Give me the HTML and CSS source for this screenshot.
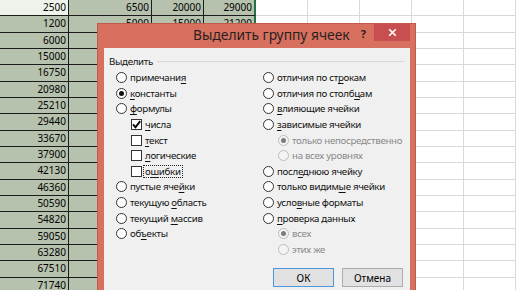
FILE: index.html
```html
<!DOCTYPE html>
<html>
<head>
    <title>Выделить группу ячеек</title>
    <link rel="stylesheet" href="styles.css">
</head>
<body>
    <div class="sheet">
        <div class="c s active">2500</div><div class="c s">6500</div><div class="c s">20000</div><div class="c s edge">29000</div><div class="c"></div><div class="c"></div><div class="c"></div><div class="c"></div><div class="c"></div>
        <div class="c s">1200</div><div class="c s">5000</div><div class="c s">15000</div><div class="c s edge">21200</div><div class="c"></div><div class="c"></div><div class="c"></div><div class="c"></div><div class="c"></div>
        <div class="c s">6000</div><div class="c s"></div><div class="c s"></div><div class="c s edge"></div><div class="c"></div><div class="c"></div><div class="c"></div><div class="c"></div><div class="c"></div>
        <div class="c s">15000</div><div class="c s"></div><div class="c s"></div><div class="c s edge"></div><div class="c"></div><div class="c"></div><div class="c"></div><div class="c"></div><div class="c"></div>
        <div class="c s">16750</div><div class="c s"></div><div class="c s"></div><div class="c s edge"></div><div class="c"></div><div class="c"></div><div class="c"></div><div class="c"></div><div class="c"></div>
        <div class="c s">20980</div><div class="c s"></div><div class="c s"></div><div class="c s edge"></div><div class="c"></div><div class="c"></div><div class="c"></div><div class="c"></div><div class="c"></div>
        <div class="c s">25210</div><div class="c s"></div><div class="c s"></div><div class="c s edge"></div><div class="c"></div><div class="c"></div><div class="c"></div><div class="c"></div><div class="c"></div>
        <div class="c s">29440</div><div class="c s"></div><div class="c s"></div><div class="c s edge"></div><div class="c"></div><div class="c"></div><div class="c"></div><div class="c"></div><div class="c"></div>
        <div class="c s">33670</div><div class="c s"></div><div class="c s"></div><div class="c s edge"></div><div class="c"></div><div class="c"></div><div class="c"></div><div class="c"></div><div class="c"></div>
        <div class="c s">37900</div><div class="c s"></div><div class="c s"></div><div class="c s edge"></div><div class="c"></div><div class="c"></div><div class="c"></div><div class="c"></div><div class="c"></div>
        <div class="c s">42130</div><div class="c s"></div><div class="c s"></div><div class="c s edge"></div><div class="c"></div><div class="c"></div><div class="c"></div><div class="c"></div><div class="c"></div>
        <div class="c s">46360</div><div class="c s"></div><div class="c s"></div><div class="c s edge"></div><div class="c"></div><div class="c"></div><div class="c"></div><div class="c"></div><div class="c"></div>
        <div class="c s">50590</div><div class="c s"></div><div class="c s"></div><div class="c s edge"></div><div class="c"></div><div class="c"></div><div class="c"></div><div class="c"></div><div class="c"></div>
        <div class="c s">54820</div><div class="c s"></div><div class="c s"></div><div class="c s edge"></div><div class="c"></div><div class="c"></div><div class="c"></div><div class="c"></div><div class="c"></div>
        <div class="c s">59050</div><div class="c s"></div><div class="c s"></div><div class="c s edge"></div><div class="c"></div><div class="c"></div><div class="c"></div><div class="c"></div><div class="c"></div>
        <div class="c s">63280</div><div class="c s"></div><div class="c s"></div><div class="c s edge"></div><div class="c"></div><div class="c"></div><div class="c"></div><div class="c"></div><div class="c"></div>
        <div class="c s">67510</div><div class="c s"></div><div class="c s"></div><div class="c s edge"></div><div class="c"></div><div class="c"></div><div class="c"></div><div class="c"></div><div class="c"></div>
        <div class="c s">71740</div><div class="c s"></div><div class="c s"></div><div class="c s edge"></div><div class="c"></div><div class="c"></div><div class="c"></div><div class="c"></div><div class="c"></div>
    </div>

    <div class="dialog">
        <div class="titlebar">
            <span class="title">Выделить группу ячеек</span>
            <span class="help">?</span>
            <span class="close">
                <svg width="9" height="9" viewBox="0 0 9 9"><path d="M1.2 1.2L7.8 7.8M7.8 1.2L1.2 7.8" stroke="#fff" stroke-width="1.6"/></svg>
            </span>
        </div>
        <div class="client">
            <div class="group-head"><span>Выделить</span><i></i></div>
            <div class="cols">
                <div class="col left">
                    <div class="opt"><span class="radio"></span><span>примечани<u>я</u></span></div>
                    <div class="opt"><span class="radio on"></span><span><u>к</u>онстанты</span></div>
                    <div class="opt"><span class="radio"></span><span><u>ф</u>ормулы</span></div>
                    <div class="opt sub"><span class="check on"><svg width="9" height="9" viewBox="0 0 9 9"><path d="M1 4.4L3.5 7.3L8.2 1.2" fill="none" stroke="#000" stroke-width="1.9"/></svg></span><span><u>ч</u>исла</span></div>
                    <div class="opt sub"><span class="check"></span><span><u>т</u>екст</span></div>
                    <div class="opt sub"><span class="check"></span><span><u>л</u>огические</span></div>
                    <div class="opt sub"><span class="check"></span><span class="focus">о<u>ш</u>ибки</span></div>
                    <div class="opt"><span class="radio"></span><span>пустые яче<u>й</u>ки</span></div>
                    <div class="opt"><span class="radio"></span><span>текущую <u>о</u>бласть</span></div>
                    <div class="opt"><span class="radio"></span><span>текущий <u>м</u>ассив</span></div>
                    <div class="opt"><span class="radio"></span><span>об<u>ъ</u>екты</span></div>
                </div>
                <div class="col right">
                    <div class="opt"><span class="radio"></span><span>отличия по ст<u>р</u>окам</span></div>
                    <div class="opt"><span class="radio"></span><span>отличия по столб<u>ц</u>ам</span></div>
                    <div class="opt"><span class="radio"></span><span><u>в</u>лияющие ячейки</span></div>
                    <div class="opt"><span class="radio"></span><span><u>з</u>ависимые ячейки</span></div>
                    <div class="opt sub off"><span class="radio on"></span><span>только непосредственно</span></div>
                    <div class="opt sub off"><span class="radio"></span><span>на всех уровнях</span></div>
                    <div class="opt"><span class="radio"></span><span>посл<u>е</u>днюю ячейку</span></div>
                    <div class="opt"><span class="radio"></span><span>только видим<u>ы</u>е ячейки</span></div>
                    <div class="opt"><span class="radio"></span><span>усло<u>в</u>ные форматы</span></div>
                    <div class="opt"><span class="radio"></span><span><u>п</u>роверка данных</span></div>
                    <div class="opt sub off"><span class="radio on"></span><span>всех</span></div>
                    <div class="opt sub off"><span class="radio"></span><span>этих же</span></div>
                </div>
            </div>
            <div class="buttons">
                <button class="btn default">ОК</button>
                <button class="btn">Отмена</button>
            </div>
        </div>
    </div>
</body>
</html>
```

FILE: styles.css
```css
html, body {
    margin: 0;
    padding: 0;
    height: 290px;
    overflow: hidden;
    background-color: #fff;
}

body {
    position: relative;
    font-family: "Noto Sans", sans-serif;
}

/* spreadsheet behind the dialog */
.sheet {
    display: grid;
    grid-template-columns: 69px 83px 52px 52px 52px 52px 52px 52px 52px;
    grid-auto-rows: 16.33px;
}

.c {
    box-sizing: border-box;
    border-right: 1px solid #d9d9d9;
    border-bottom: 1px solid #d9d9d9;
    font-size: 10px;
    line-height: 15px;
    text-align: right;
    padding-right: 2px;
    color: #000;
}

.c.s {
    background-color: #b6c2ad;
    border-right-color: #1c1c1c;
    border-bottom-color: #1c1c1c;
}

.c.active {
    background-color: #edf2ea;
}

.c.edge {
    border-right: 2px solid #217346;
}

/* dialog */
.dialog {
    position: absolute;
    left: 97px;
    top: 23px;
    width: 319px;
    height: 300px;
    box-sizing: border-box;
    background-color: #d8705f;
    border: 1px solid #c25a4b;
    padding: 0 5px 0 6px;
    display: flex;
    flex-direction: column;
}

.titlebar {
    height: 24px;
    display: flex;
    align-items: flex-start;
    flex-shrink: 0;
}

.title {
    margin-left: 89px;
    padding-top: 2px;
    font-size: 13.8px;
    line-height: 18px;
    white-space: nowrap;
    color: #2a1f1d;
}

.help {
    margin-left: auto;
    font-size: 11px;
    font-weight: bold;
    line-height: 14px;
    padding-top: 3px;
    margin-right: 8px;
    color: #2a1f1d;
}

.close {
    width: 36px;
    height: 17px;
    flex-shrink: 0;
    background-color: #c74f4f;
    display: flex;
    align-items: center;
    justify-content: center;
}

.client {
    flex: 1;
    background-color: #f0f0f0;
    padding-top: 6px;
    font-size: 9.7px;
    letter-spacing: -0.3px;
    color: #111;
}

.group-head {
    display: flex;
    align-items: center;
    height: 14px;
    padding-left: 5px;
    padding-right: 6px;
}

.group-head i {
    flex: 1;
    height: 1px;
    margin-left: 4px;
    background-color: #d8d8d8;
}

.cols {
    display: flex;
    margin-top: 2px;
}

.col {
    flex-shrink: 0;
}

.col.left {
    width: 147px;
    margin-left: 12px;
}

.opt {
    height: 15.6px;
    display: flex;
    align-items: center;
    white-space: nowrap;
}

.opt.sub {
    padding-left: 15px;
}

.opt.off {
    color: #8a8a8a;
}

.opt u {
    text-underline-offset: 2px;
}

.radio {
    width: 11px;
    height: 11px;
    box-sizing: border-box;
    border: 1px solid #333;
    border-radius: 50%;
    background-color: #fff;
    margin-right: 3px;
    display: flex;
    align-items: center;
    justify-content: center;
    flex-shrink: 0;
}

.radio.on::after {
    content: "";
    width: 5px;
    height: 5px;
    border-radius: 50%;
    background-color: #111;
}

.opt.off .radio {
    border-color: #bcbcbc;
    background-color: #f4f4f4;
}

.opt.off .radio.on::after {
    background-color: #7c7c7c;
}

.check {
    width: 11px;
    height: 11px;
    box-sizing: border-box;
    border: 1px solid #333;
    background-color: #fff;
    margin-right: 3px;
    display: flex;
    align-items: center;
    justify-content: center;
    flex-shrink: 0;
}

.focus {
    outline: 1px dotted #222;
    outline-offset: 0;
    padding: 0 1px;
    margin-left: -1px;
    line-height: 11px;
}

.buttons {
    display: flex;
    justify-content: flex-end;
    gap: 8px;
    margin-top: 11px;
    padding-right: 7px;
}

.btn {
    width: 61px;
    height: 19px;
    padding: 0;
    font-family: "Noto Sans", sans-serif;
    font-size: 10px;
    color: #000;
    background-color: #e1e1e1;
    border: 1px solid #adadad;
}

.btn.default {
    border-color: #4c97dc;
}
```
